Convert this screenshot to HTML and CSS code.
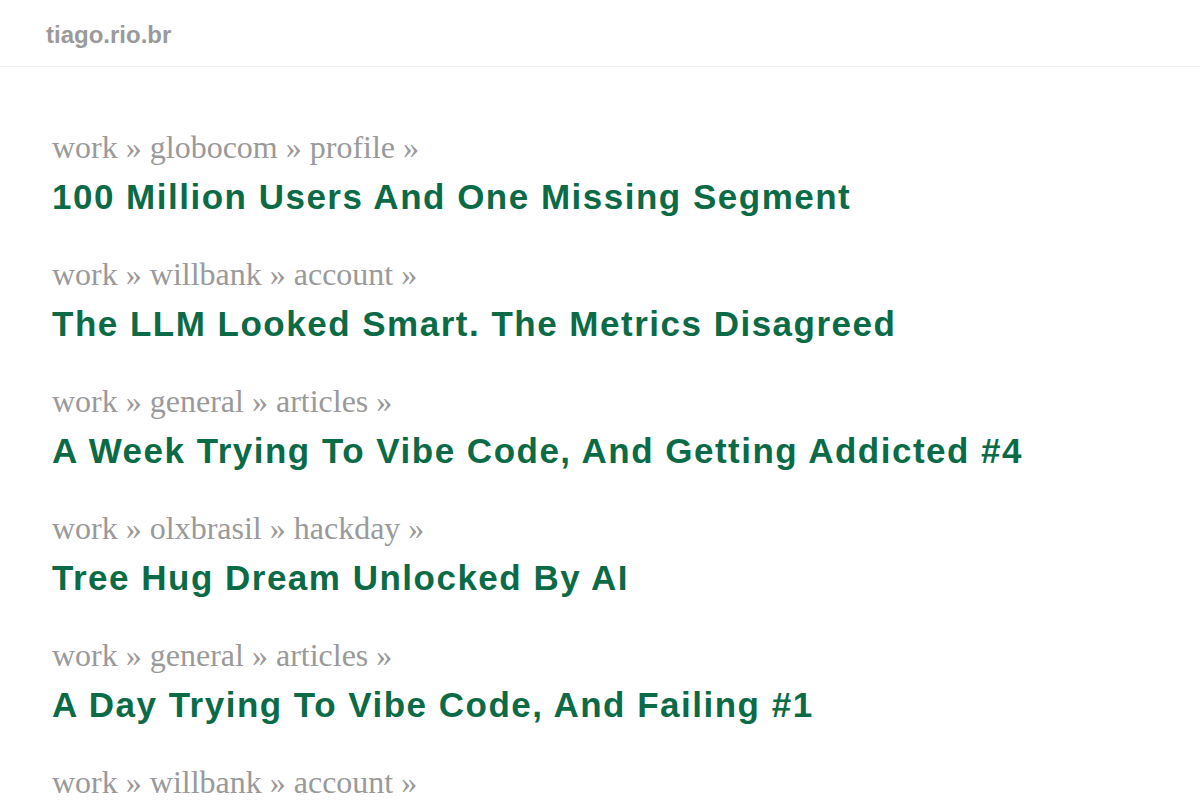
FILE: index.html
```html
<!DOCTYPE html>
<html lang="en">
<head>
<meta charset="utf-8">
<title>tiago.rio.br</title>
<link rel="stylesheet" href="styles.css">
</head>
<body>
<header class="site-header">
  <a class="site-title" href="#">tiago.rio.br</a>
</header>
<main class="posts">
  <article class="post">
    <div class="crumbs">work » globocom » profile »</div>
    <h2 class="post-title">100 Million Users And One Missing Segment</h2>
  </article>
  <article class="post">
    <div class="crumbs">work » willbank » account »</div>
    <h2 class="post-title">The LLM Looked Smart. The Metrics Disagreed</h2>
  </article>
  <article class="post">
    <div class="crumbs">work » general » articles »</div>
    <h2 class="post-title">A Week Trying To Vibe Code, And Getting Addicted #4</h2>
  </article>
  <article class="post">
    <div class="crumbs">work » olxbrasil » hackday »</div>
    <h2 class="post-title">Tree Hug Dream Unlocked By AI</h2>
  </article>
  <article class="post">
    <div class="crumbs">work » general » articles »</div>
    <h2 class="post-title">A Day Trying To Vibe Code, And Failing #1</h2>
  </article>
  <article class="post">
    <div class="crumbs">work » willbank » account »</div>
    <h2 class="post-title">The LLM Looked Smart. The Metrics Disagreed</h2>
  </article>
</main>
</body>
</html>
```
FILE: styles.css
```css
html, body {
  margin: 0;
  padding: 0;
  background: #ffffff;
}
body {
  font-family: "Liberation Sans", Arial, sans-serif;
}
.site-header {
  height: 66px;
  border-bottom: 1px solid #eeeeee;
  display: flex;
  align-items: center;
  padding: 0 46px;
  box-sizing: content-box;
}
.site-title {
  font-size: 24px;
  font-weight: bold;
  color: #9a9a9a;
  text-decoration: none;
  line-height: 1;
  margin-top: 3px;
}
.posts {
  padding: 56px 52px 0;
  display: flex;
  flex-direction: column;
  gap: 28px;
}
.post {
  display: flex;
  flex-direction: column;
}
.crumbs {
  font-family: "Liberation Serif", "Times New Roman", serif;
  font-size: 32px;
  line-height: 48px;
  color: #9a9a9a;
}
.post-title {
  margin: 2px 0 0;
  padding-bottom: 1px;
  font-family: "Liberation Sans", Arial, sans-serif;
  font-size: 35px;
  line-height: 48px;
  font-weight: bold;
  letter-spacing: 1.5px;
  color: #0b6b47;
}
```
